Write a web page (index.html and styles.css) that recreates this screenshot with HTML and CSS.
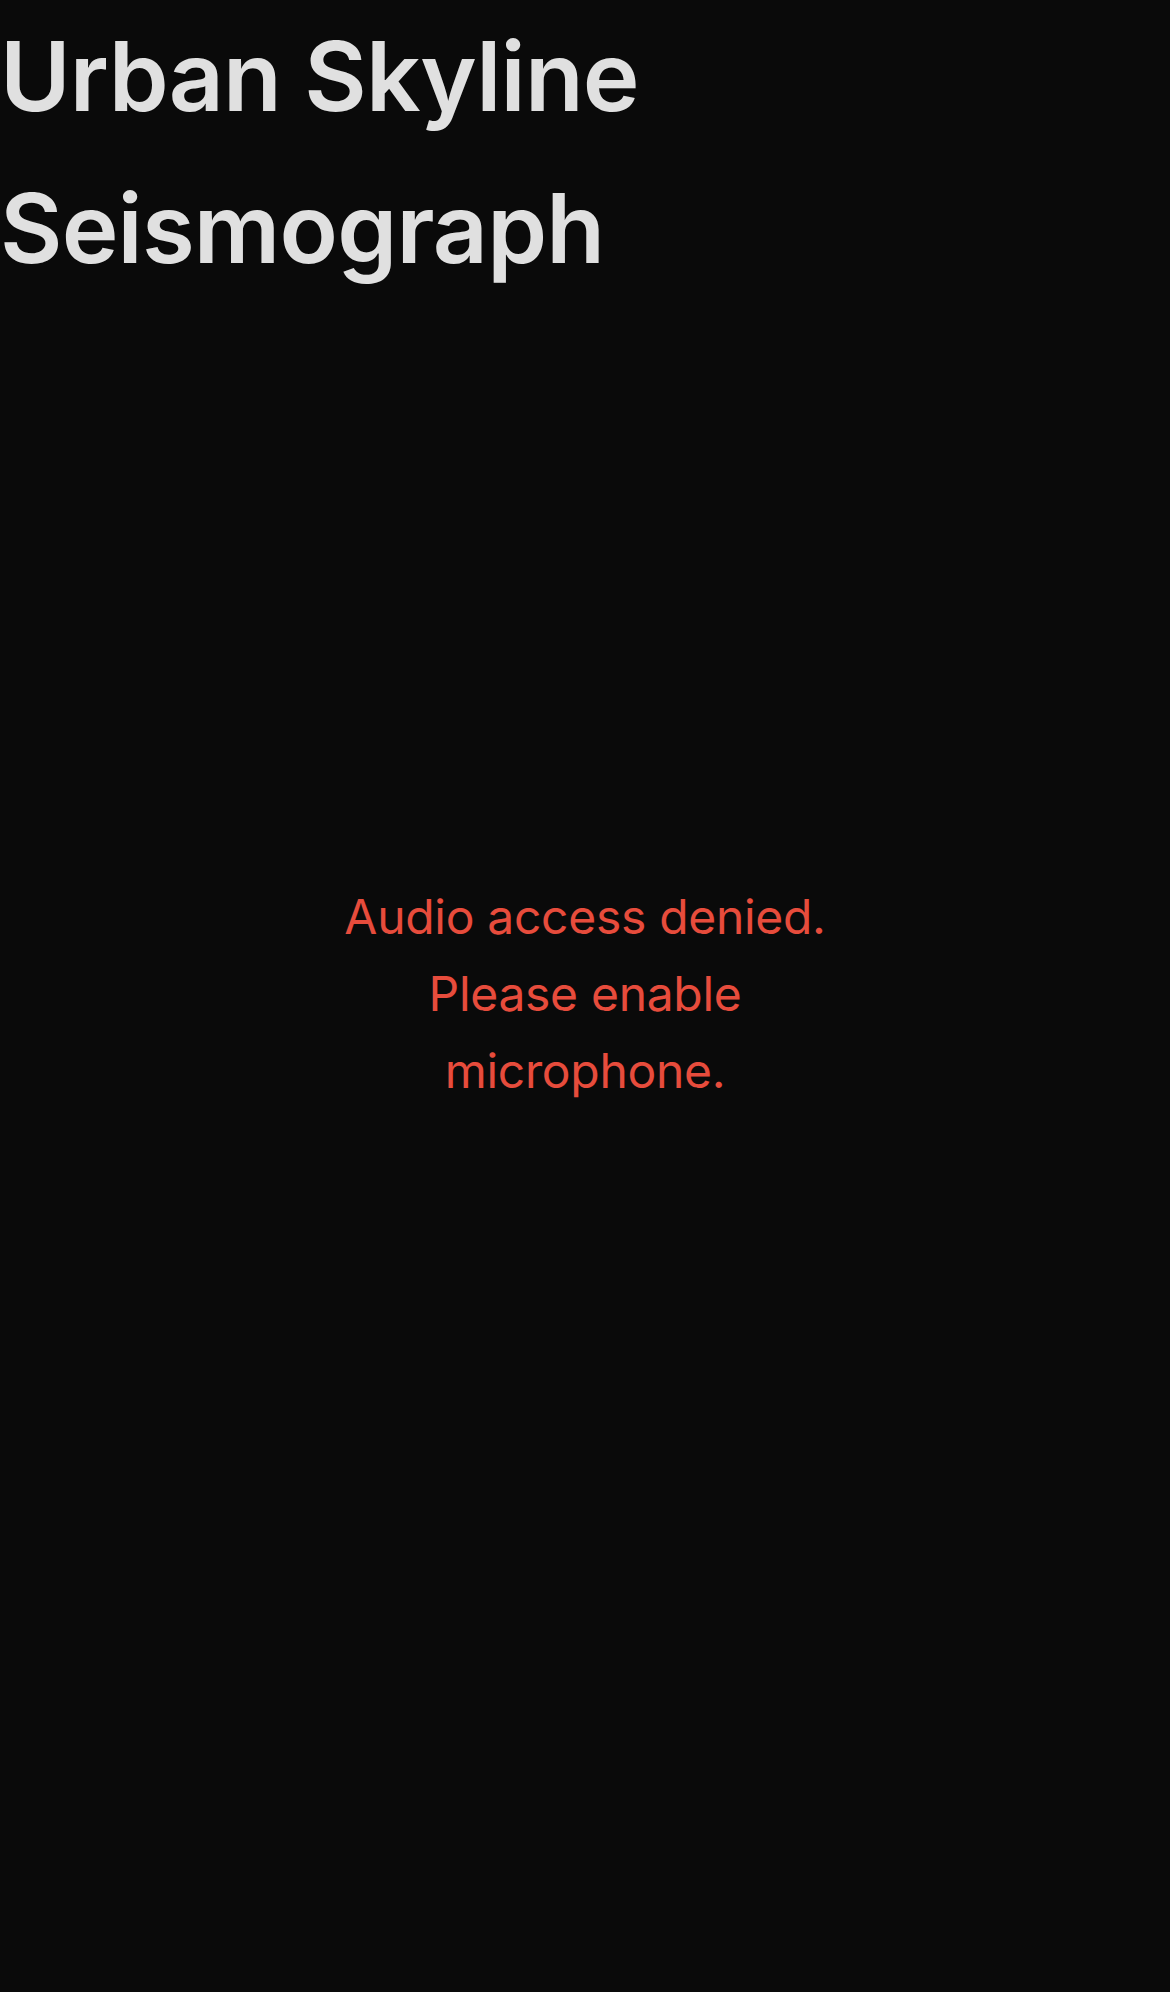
FILE: index.html
```html
<!DOCTYPE html>
<html lang="en">
<head>
    <meta charset="UTF-8">
    <meta name="viewport" content="width=device-width, initial-scale=1.0">
    <title>Urban Skyline Seismograph</title>
    <link rel="stylesheet" href="styles.css">
</head>
<body>

<h1>Urban Skyline Seismograph</h1>

<div class="stage">
    <p class="status-error">Audio access denied. Please enable microphone.</p>
</div>

</body>
</html>
```

FILE: styles.css
```css
body {
    margin: 0;
    background-color: #0a0a0a;
    font-family: Inter, "Noto Sans", sans-serif;
}
h1 {
    margin: 0;
    font-size: 96px;
    line-height: 152px;
    font-weight: 600;
    letter-spacing: -0.8px;
    color: #e0e0e0;
}
.stage {
    padding-top: 575px;
    display: flex;
    justify-content: center;
}
.status-error {
    margin: 0;
    width: 560px;
    text-align: center;
    font-size: 48px;
    line-height: 76.8px;
    letter-spacing: -0.3px;
    color: #e74c3c;
}
```
